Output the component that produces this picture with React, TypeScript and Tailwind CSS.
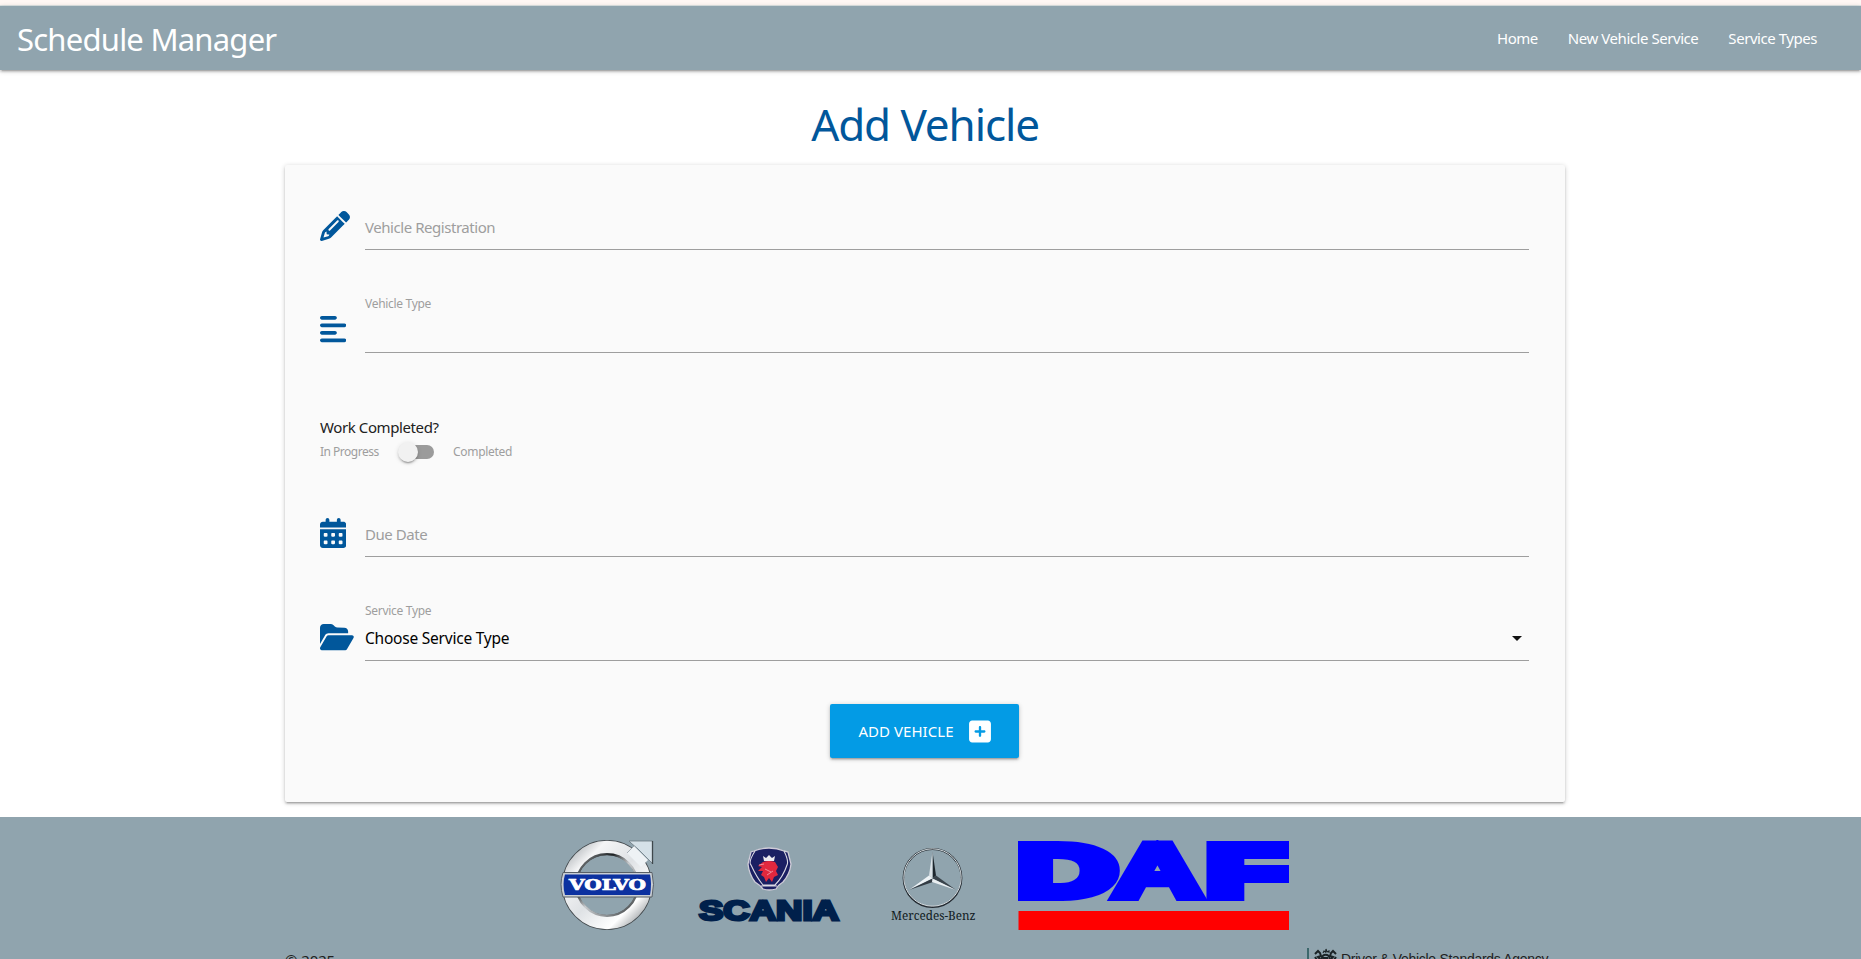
import type { ReactNode } from "react";
import {
  FaAlignLeft,
  FaCalendarDays,
  FaFolderOpen,
  FaPencil,
  FaSquarePlus,
} from "react-icons/fa6";

function VolvoLogo() {
  return (
    <svg width="96" height="92" viewBox="0 0 96 92">
      <defs>
        <linearGradient id="ring" x1="0" y1="0" x2="1" y2="1">
          <stop offset="0" stopColor="#a9aeb2" />
          <stop offset="0.2" stopColor="#f4f5f6" />
          <stop offset="0.5" stopColor="#dfe2e5" />
          <stop offset="0.8" stopColor="#ffffff" />
          <stop offset="1" stopColor="#8a8f93" />
        </linearGradient>
        <linearGradient id="inner" x1="0" y1="0" x2="1" y2="1">
          <stop offset="0" stopColor="#9a9ea1" />
          <stop offset="0.3" stopColor="#1d2123" />
          <stop offset="0.5" stopColor="#c8cbce" />
          <stop offset="0.75" stopColor="#8a8e91" />
          <stop offset="1" stopColor="#202426" />
        </linearGradient>
      </defs>
      <circle cx="47" cy="45" r="37.500" fill="none" stroke="#43494d" strokeWidth="15" />
      <circle cx="47" cy="45" r="37.500" fill="none" stroke="url(#ring)" strokeWidth="13.500" />
      <circle cx="47" cy="45" r="30.800" fill="none" stroke="url(#inner)" strokeWidth="2.200" />
      <path d="M69 1H92.500V23.500L87 18L78 9L71 3Z" fill="#d5e1e8" stroke="#6b7880" strokeWidth="0.800" />
      <path d="M92.500 1V24" stroke="#3f484c" strokeWidth="1.300" />
      <path d="M74 6L88 20L81 27L67 13Z" fill="#eef2f5" />
      <path d="M67 13L74 6" fill="none" stroke="#8b969c" strokeWidth="0.700" />
      <path d="M3 32.500H92Q95 44 92 57H3Q-1 44 3 32.500Z" fill="#c9ced4" stroke="#596067" />
      <path d="M5 34.500H90Q92 44 90 55H5Q2 44 5 34.500Z" fill="#0c31a0" />
      <text x="9" y="50" fill="#fff" stroke="#fff" strokeWidth="0.700" fontFamily="DejaVu Serif, serif" fontWeight="700" fontSize="14" textLength="77" lengthAdjust="spacingAndGlyphs">VOLVO</text>
    </svg>
  );
}

function ScaniaLogo() {
  return (
    <svg width="144" height="92" viewBox="0 0 144 92">
      <path d="M57 11Q64 8 72 8Q80 8 87 11L91 12L94 24Q93 34 86 42Q81 45 79 49Q72 51 66 49Q63 45 58 42Q52 34 51 24L54 12Z" fill="#1b1f63" stroke="#cfccd8" strokeWidth="1.300" />
      <path d="M58 11Q51 22 54 25Q60 38 66 45H78Q86 37 90 25Q92 21 87 11M64 46H80" fill="none" stroke="#dcdae4" strokeWidth="1.100" />
      <path d="M66 16L69 18L72 15L75 18L78 16L77 21H67Z" fill="#eceaf0" />
      <path d="M66 22Q72 20 78 22L81 27L79 31L81 35L77 37L75 42L72 38L69 42L67 37L64 35L66 31L61 31L65 27L61 26Z" fill="#e1283e" />
      <path d="M62 25L67 24M68 29L74 32M70 35L76 31" fill="none" stroke="#f0a7b4" strokeWidth="0.800" />
      <text x="2" y="80" fill="#00204b" stroke="#00204b" strokeWidth="2.800" fontFamily="Liberation Sans, sans-serif" fontWeight="700" fontSize="28.500" textLength="140" lengthAdjust="spacingAndGlyphs">SCANIA</text>
    </svg>
  );
}

function MercedesLogo() {
  return (
    <svg width="86" height="92" viewBox="0 0 86 92">
      <circle cx="41.500" cy="38" r="29" fill="none" stroke="#242b32" strokeWidth="1.800" />
      <circle cx="41.500" cy="37.500" r="28.700" fill="none" stroke="#e6edf1" strokeWidth="0.900" />
      <path d="M41.500 11.500L45 35.500L41.500 38.500Z" fill="#1d262d" />
      <path d="M41.500 11.500L38 35.500L41.500 38.500Z" fill="#dce3e8" />
      <path d="M18 50L38 35.500L41.500 38.500Z" fill="#eef3f6" />
      <path d="M18 50L41.500 38.500L42 42Z" fill="#333c44" />
      <path d="M65 50L45 35.500L41.500 38.500Z" fill="#39434b" />
      <path d="M65 50L41.500 38.500L41 42Z" fill="#e9eef1" />
      <text x="0" y="80" fill="#101b22" fontFamily="Noto Serif, Liberation Serif, serif" fontSize="13" textLength="84.500" lengthAdjust="spacingAndGlyphs">Mercedes-Benz</text>
    </svg>
  );
}

function DafLogo() {
  return (
    <svg width="271" height="92" viewBox="0 0 271 92">
      <g fill="#0000ff" stroke="#0000ff" fontFamily="Liberation Sans, sans-serif" fontWeight="700">
        <text x="-4.800" y="55.500" fontSize="72.500" strokeWidth="10" textLength="102.800" lengthAdjust="spacingAndGlyphs">D</text>
        <text x="95" y="56.500" fontSize="75.500" strokeWidth="8" textLength="89" lengthAdjust="spacingAndGlyphs">A</text>
        <text x="188.700" y="55.500" fontSize="72.500" strokeWidth="10" textLength="82" lengthAdjust="spacingAndGlyphs">F</text>
      </g>
      <rect x="0.500" y="71" width="270.500" height="19" fill="#ff0000" />
    </svg>
  );
}

function Crest() {
  return (
    <svg width="23" height="20" viewBox="0 0 23 20" fill="none" stroke="#1c2427" strokeWidth="2">
      <path d="M9 5L10 3L11.500 4L12 1L13 4L15 3L15 5" strokeWidth="1.100" />
      <path d="M1 6L4 3L6 5L7 8L4 9L7 12L3 18M1 9L3 12M7 13V18" />
      <path d="M22 6L19 3L17 5L16 8L19 9L16 12L20 18M22 9L20 12M16 13V18" />
      <circle cx="11.700" cy="10.500" r="3.800" />
      <path d="M9 10H14" />
    </svg>
  );
}

function Field({ icon, children, className }: { icon: ReactNode; children: ReactNode; className: string }) {
  return (
    <div className={`flex ${className}`}>
      <div className="w-[45px] shrink-0 text-[#01579b]">{icon}</div>
      <div className="flex grow flex-col justify-between border-b border-[#9e9e9e]">{children}</div>
    </div>
  );
}

export default function App() {
  return (
    <div className="flex h-[959px] flex-col overflow-hidden bg-white font-['Noto_Sans','Open_Sans',sans-serif] text-[#212121]">
      <div className="h-[6px] shrink-0 border-b border-[#dfe5e5] bg-[#fff7f4]" />
      <nav className="flex h-[64px] shrink-0 items-center justify-between bg-[#90a4ae] pr-[44px] pl-[17px] text-white shadow-[0_2px_2px_0_rgba(0,0,0,0.14),0_3px_1px_-2px_rgba(0,0,0,0.12),0_1px_5px_0_rgba(0,0,0,0.2)]">
        <a className="pt-[2px] text-[31px] leading-[62px] tracking-[-0.770px]">Schedule Manager</a>
        <ul className="flex gap-[30px] text-[15px] tracking-[-0.45px]">
          <li>Home</li>
          <li>New Vehicle Service</li>
          <li>Service Types</li>
        </ul>
      </nav>

      <main className="mr-[11px] flex h-[747px] shrink-0 flex-col items-center">
        <h1 className="flex h-[95px] shrink-0 items-center pt-[13px] text-[44px] leading-none tracking-[-1.100px] text-[#01579b]">Add Vehicle</h1>
        <form className="flex h-[637px] w-[1280px] flex-col rounded-[2px] bg-[#fafafa] pt-[46px] pr-[36px] pl-[35px] shadow-[0_2px_2px_0_rgba(0,0,0,0.14),0_3px_1px_-2px_rgba(0,0,0,0.12),0_1px_5px_0_rgba(0,0,0,0.2)]">
          <Field className="h-[39px]" icon={<FaPencil className="h-[30px] w-[30px]" />}>
            <label className="pt-[5px] text-[15px] leading-[22px] tracking-[-0.45px] text-[#9e9e9e]">Vehicle Registration</label>
          </Field>

          <Field className="mt-[44px] h-[59px]" icon={<FaAlignLeft className="mt-[20px] h-[30px] w-[26.250px]" />}>
            <label className="text-[12px] leading-[20px] tracking-[-0.3px] text-[#9e9e9e]">Vehicle Type</label>
          </Field>

          <div className="mt-[62px] h-[56px]">
            <p className="text-[15px] leading-[24px] tracking-[-0.4px]">Work Completed?</p>
            <div className="flex h-[24px] items-center text-[12px] tracking-[-0.2px] text-[#9e9e9e]">
              <span className="w-[80px] pt-px tracking-[-0.500px]">In Progress</span>
              <span className="relative mt-[2px] h-[14px] w-[34px] rounded-full bg-[#9b9b9b]">
                <span className="absolute top-[-3px] left-[-2px] size-[20px] rounded-full bg-[#f1f1f1] shadow-[0_3px_1px_-2px_rgba(0,0,0,0.2),0_2px_2px_0_rgba(0,0,0,0.14),0_1px_5px_0_rgba(0,0,0,0.12)]" />
              </span>
              <span className="ml-[19px] pt-px tracking-[-0.3px]">Completed</span>
            </div>
          </div>

          <Field className="mt-[47px] h-[39px]" icon={<FaCalendarDays className="h-[30px] w-[26.250px]" />}>
            <label className="pt-[5px] text-[15px] leading-[22px] tracking-[-0.45px] text-[#9e9e9e]">Due Date</label>
          </Field>

          <Field className="mt-[44px] h-[60px]" icon={<FaFolderOpen className="mt-[21px] h-[30px] w-[33.750px]" />}>
            <label className="text-[12px] leading-[20px] tracking-[-0.300px] text-[#9e9e9e]">Service Type</label>
            <div className="flex items-center justify-between pr-[7px] pb-[10px] text-[15.500px] leading-[24px] tracking-[-0.220px] text-black">
              <span>Choose Service Type</span>
              <svg width="10" height="5" viewBox="0 0 10 5"><path d="M0 0H10L5 5Z" fill="#111" /></svg>
            </div>
          </Field>

          <button type="button" className="mt-[43px] flex h-[54px] w-[189px] shrink-0 items-center gap-[15px] self-center rounded-[2px] bg-[#039be5] pl-[28px] text-[15px] whitespace-nowrap text-white shadow-[0_2px_2px_0_rgba(0,0,0,0.14),0_3px_1px_-2px_rgba(0,0,0,0.12),0_1px_5px_0_rgba(0,0,0,0.2)]">
            <span className="w-[96px] tracking-[0.050px]">ADD VEHICLE</span>
            <FaSquarePlus className="h-[25px] w-[22px]" />
          </button>
        </form>
      </main>

      <footer className="h-[142px] shrink-0 bg-[#90a4ae]">
        <div className="flex pt-[23px] pl-[560px]">
          <VolvoLogo />
          <div className="ml-[41px]"><ScaniaLogo /></div>
          <div className="ml-[50px]"><MercedesLogo /></div>
          <div className="ml-[41px]"><DafLogo /></div>
        </div>
        <div className="mr-[11px] flex justify-between px-[285px] pt-[16px]">
          <span className="text-[15px] leading-[24px] tracking-[-0.1px]">© 2025</span>
          <div className="-mr-[2px] flex h-[40px] w-[260px] border-l-2 border-[#3d686c] pl-[5px]">
            <Crest />
            <span className="pt-[1px] pl-[4px] font-['Liberation_Sans',Arial,sans-serif] text-[14px] leading-[20px] tracking-[-0.300px] whitespace-nowrap">Driver &amp; Vehicle Standards Agency</span>
          </div>
        </div>
      </footer>
    </div>
  );
}
